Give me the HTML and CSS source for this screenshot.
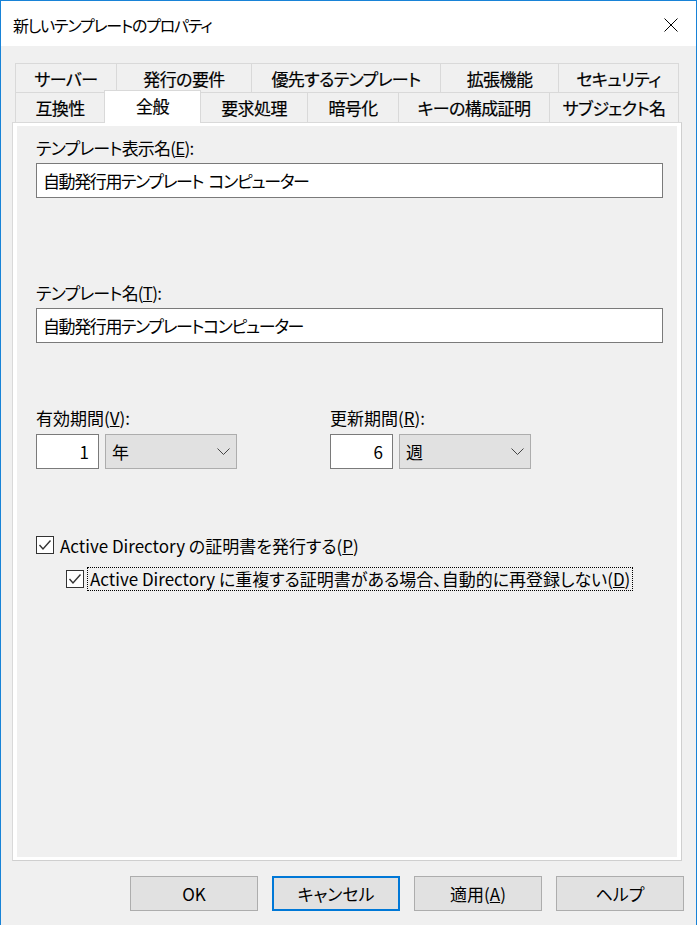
FILE: index.html
```html
<!DOCTYPE html>
<html lang="ja">
<head>
<meta charset="UTF-8" />
<meta name="viewport" content="width=device-width, initial-scale=1.0"/>
<title>新しいテンプレートのプロパティ</title>
<link rel="stylesheet" href="styles.css">
</head>
<body>

<div class="window">
  <div class="titlebar">
    <span class="title">新しいテンプレートのプロパティ</span>
    <button class="close" type="button" aria-label="閉じる">
      <svg width="14" height="14" viewBox="0 0 14 14"><path d="M0.5 0.5 L13.5 13.5 M13.5 0.5 L0.5 13.5" stroke="#000" stroke-width="1" fill="none"/></svg>
    </button>
  </div>

  <div class="dialog">
    <div class="tabs">
      <div class="tab-row row-top">
        <div class="tab t-server">サーバー</div>
        <div class="tab t-issue">発行の要件</div>
        <div class="tab t-super">優先するテンプレート</div>
        <div class="tab t-ext">拡張機能</div>
        <div class="tab t-sec">セキュリティ</div>
      </div>
      <div class="tab-row row-bottom">
        <div class="tab t-compat">互換性</div>
        <div class="tab t-general active">全般</div>
        <div class="tab t-request">要求処理</div>
        <div class="tab t-crypto">暗号化</div>
        <div class="tab t-attest">キーの構成証明</div>
        <div class="tab t-subject">サブジェクト名</div>
      </div>
    </div>

    <div class="panel">
      <div class="page">
        <label class="field-label kana" for="displayName">テンプレート表示名(<u>E</u>):</label>
        <input class="text-input" id="displayName" type="text" value="自動発行用テンプレート コンピューター" />

        <label class="field-label kana label-name" for="templateName">テンプレート名(<u>T</u>):</label>
        <input class="text-input" id="templateName" type="text" value="自動発行用テンプレートコンピューター" />

        <div class="period-row">
          <div class="period">
            <label class="field-label" for="validity">有効期間(<u>V</u>):</label>
            <div class="period-controls">
              <input class="spin" id="validity" type="text" value="1" />
              <div class="combo">
                <span>年</span>
                <svg width="13" height="7" viewBox="0 0 13 7"><path d="M0.5 0.5 L6.5 6.5 L12.5 0.5" stroke="#444" stroke-width="1" fill="none"/></svg>
              </div>
            </div>
          </div>
          <div class="period">
            <label class="field-label" for="renewal">更新期間(<u>R</u>):</label>
            <div class="period-controls">
              <input class="spin" id="renewal" type="text" value="6" />
              <div class="combo">
                <span>週</span>
                <svg width="13" height="7" viewBox="0 0 13 7"><path d="M0.5 0.5 L6.5 6.5 L12.5 0.5" stroke="#444" stroke-width="1" fill="none"/></svg>
              </div>
            </div>
          </div>
        </div>

        <div class="check publish">
          <span class="check-box">
            <svg width="16" height="16" viewBox="0 0 16 16"><path d="M2.5 8 L6 12 L13.5 3.5" stroke="#333" stroke-width="1.4" fill="none"/></svg>
          </span>
          <span>Active Directory の証明書を発行する(<u>P</u>)</span>
        </div>
        <div class="check nested">
          <span class="check-box">
            <svg width="16" height="16" viewBox="0 0 16 16"><path d="M2.5 8 L6 12 L13.5 3.5" stroke="#333" stroke-width="1.4" fill="none"/></svg>
          </span>
          <span class="focused">Active Directory に重複する証明書がある場合、自動的に再登録しない(<u>D</u>)</span>
        </div>
      </div>
    </div>

    <div class="buttons">
      <button type="button" class="btn">OK</button>
      <button type="button" class="btn default">キャンセル</button>
      <button type="button" class="btn">適用(<u>A</u>)</button>
      <button type="button" class="btn">ヘルプ</button>
    </div>
  </div>
</div>

</body>
</html>
```

FILE: styles.css
```css
body {
  margin: 0;
  font-family: "Noto Sans CJK JP", "Noto Sans", sans-serif;
  font-size: 17px;
  font-feature-settings: "palt";
  color: #000;
  background: #f0f0f0;
}

.window {
  width: 697px;
  height: 925px;
  box-sizing: border-box;
  border: 1px solid #1883d7;
  border-bottom: 0;
  background: #f0f0f0;
}

.titlebar {
  height: 45px;
  box-sizing: border-box;
  padding: 2px 0 0 12px;
  background: #fff;
  display: flex;
  align-items: center;
  justify-content: space-between;
}

.title {
  font-size: 16px;
  letter-spacing: -1.2px;
}

.close {
  width: 50px;
  height: 43px;
  border: 0;
  padding: 0;
  background: transparent;
  display: flex;
  align-items: center;
  justify-content: center;
}

.dialog {
  padding: 17px 14px 0 11px;
}

/* two rows of tabs over the page */
.tabs {
  margin: 0 3px;
}

.tab-row {
  display: flex;
}

.tab {
  box-sizing: border-box;
  border: 1px solid #d9d9d9;
  border-bottom: 0;
  margin-left: -1px;
  background: #f0f0f0;
  display: flex;
  align-items: center;
  justify-content: center;
  white-space: nowrap;
  line-height: 1;
  letter-spacing: -0.6px;
  -webkit-text-stroke: 0.2px #000;
}

.tab:first-child {
  margin-left: 0;
}

.row-top .tab {
  height: 29px;
}

.row-bottom .tab {
  height: 30px;
}

.row-bottom .tab.active {
  height: 33px;
  margin-top: -2px;
  margin-bottom: -1px;
  padding-bottom: 4px;
  background: #fff;
  position: relative;
  z-index: 1;
}

.t-server { width: 102px; }
.t-issue { width: 136px; }
.t-super { width: 190px; }
.t-ext { width: 119px; }
.t-sec { width: 121px; }

.t-compat { width: 90px; }
.t-general { width: 97px; }
.t-request { width: 108px; }
.t-crypto { width: 92px; }
.t-attest { width: 152px; }
.t-subject { width: 130px; }

.panel {
  height: 739px;
  box-sizing: border-box;
  border: 1px solid #d9d9d9;
  border-right-color: #cfcfcf;
  border-bottom-color: #cfcfcf;
  background: #fff;
  padding: 3px 4px 3px 4px;
}

.page {
  height: 100%;
  box-sizing: border-box;
  background: #f0f0f0;
  padding: 12px 14px 0 19px;
}

.field-label {
  display: block;
  height: 20px;
  line-height: 20px;
}

/* labels that are mostly katakana run a little tighter */
.field-label.kana {
  letter-spacing: -0.8px;
}

.label-name {
  margin-top: 85px;
}

input {
  font: inherit;
  font-feature-settings: "palt";
  color: #000;
}

.text-input {
  display: block;
  width: 100%;
  height: 35px;
  box-sizing: border-box;
  margin: 5px 0 0;
  padding: 0 6px;
  border: 1px solid #7a7a7a;
  background: #fff;
  letter-spacing: -1.4px;
  word-spacing: 3px;
  outline: none;
}

.period-row {
  display: flex;
  margin-top: 65px;
}

.period {
  width: 294px;
}

.period-controls {
  display: flex;
  margin-top: 6px;
}

.spin {
  width: 63px;
  height: 35px;
  box-sizing: border-box;
  margin: 0;
  padding: 0 9px 0 4px;
  border: 1px solid #7a7a7a;
  background: #fff;
  text-align: right;
  outline: none;
}

.combo {
  width: 132px;
  height: 35px;
  box-sizing: border-box;
  margin-left: 6px;
  padding: 0 6px 0 6px;
  border: 1px solid #adadad;
  background: #e1e1e1;
  display: flex;
  align-items: center;
  justify-content: space-between;
}

.check {
  display: flex;
  align-items: center;
  height: 20px;
  white-space: nowrap;
}

.publish {
  margin-top: 66px;
}

.nested {
  margin-top: 14px;
  margin-left: 30px;
}

.check-box {
  width: 18px;
  height: 18px;
  box-sizing: border-box;
  border: 1px solid #333;
  background: #fff;
  margin-right: 6px;
  display: flex;
  align-items: center;
  justify-content: center;
}

.nested .check-box {
  margin-right: 4px;
}

.focused {
  outline: 1px dotted #000;
  padding: 0 2px;
  line-height: 22px;
}

.buttons {
  display: flex;
  justify-content: flex-end;
  gap: 14px;
  margin: 15px -2px 0 0;
}

.btn {
  width: 128px;
  height: 35px;
  box-sizing: border-box;
  border: 1px solid #adadad;
  background: #e1e1e1;
  font: inherit;
  font-feature-settings: "palt";
  color: #000;
  padding: 0;
}

.btn.default {
  border: 2px solid #0078d7;
}
```
